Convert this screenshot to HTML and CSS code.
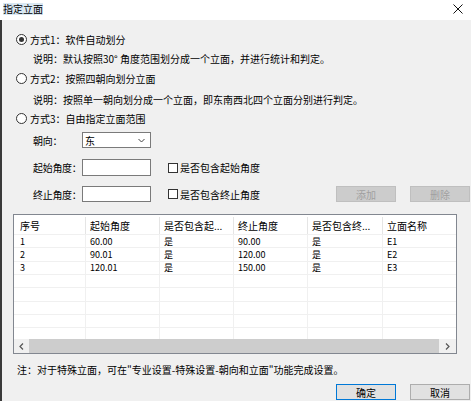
FILE: index.html
```html
<!DOCTYPE html>
<html lang="zh">
<head>
<meta charset="utf-8">
<title>指定立面</title>
<link rel="stylesheet" href="styles.css">
</head>
<body>
<div class="titlebar">
  <span class="title">指定立面</span>
  <span class="close"><svg width="10" height="10" viewBox="0 0 10 10"><path d="M0.5 0.5 L9.5 9.5 M9.5 0.5 L0.5 9.5" stroke="#111" stroke-width="1" fill="none"/></svg></span>
</div>
<div class="main">
  <div class="opt r1"><span class="radio checked"></span><span>方式1：软件自动划分</span></div>
  <div class="desc d1">说明：默认按照30° 角度范围划分成一个立面，并进行统计和判定。</div>
  <div class="opt r2"><span class="radio"></span><span>方式2：按照四朝向划分立面</span></div>
  <div class="desc d2">说明：按照单一朝向划分成一个立面，即东南西北四个立面分别进行判定。</div>
  <div class="opt r3"><span class="radio"></span><span>方式3：自由指定立面范围</span></div>

  <div class="field f-dir">
    <span class="label">朝向：</span>
    <div class="select"><span>东</span><svg class="chev" width="7" height="5" viewBox="0 0 7 5"><path d="M0.5 1 L3.5 4 L6.5 1" stroke="#444" stroke-width="1" fill="none"/></svg></div>
  </div>
  <div class="field f-start">
    <span class="label">起始角度：</span>
    <div class="input"></div>
    <span class="check"></span><span class="ctext">是否包含起始角度</span>
  </div>
  <div class="field f-end">
    <span class="label">终止角度：</span>
    <div class="input"></div>
    <span class="check"></span><span class="ctext">是否包含终止角度</span>
    <div class="btns">
      <span class="btn disabled">添加</span>
      <span class="btn disabled">删除</span>
    </div>
  </div>

  <div class="table">
    <div class="trow thead">
      <span class="c c1">序号</span><span class="c">起始角度</span><span class="c">是否包含起...</span><span class="c">终止角度</span><span class="c">是否包含终...</span><span class="c c6">立面名称</span>
    </div>
    <div class="tbody">
      <div class="trow"><span class="c c1">1</span><span class="c">60.00</span><span class="c">是</span><span class="c">90.00</span><span class="c">是</span><span class="c c6">E1</span></div>
      <div class="trow"><span class="c c1">2</span><span class="c">90.01</span><span class="c">是</span><span class="c">120.00</span><span class="c">是</span><span class="c c6">E2</span></div>
      <div class="trow"><span class="c c1">3</span><span class="c">120.01</span><span class="c">是</span><span class="c">150.00</span><span class="c">是</span><span class="c c6">E3</span></div>
      <div class="trow"><span class="c c1"></span><span class="c"></span><span class="c"></span><span class="c"></span><span class="c"></span><span class="c c6"></span></div>
      <div class="trow"><span class="c c1"></span><span class="c"></span><span class="c"></span><span class="c"></span><span class="c"></span><span class="c c6"></span></div>
      <div class="trow"><span class="c c1"></span><span class="c"></span><span class="c"></span><span class="c"></span><span class="c"></span><span class="c c6"></span></div>
      <div class="trow"><span class="c c1"></span><span class="c"></span><span class="c"></span><span class="c"></span><span class="c"></span><span class="c c6"></span></div>
      <div class="trow"><span class="c c1"></span><span class="c"></span><span class="c"></span><span class="c"></span><span class="c"></span><span class="c c6"></span></div>
    </div>
    <div class="hscroll">
      <span class="arrow left"><svg width="5" height="7" viewBox="0 0 5 7"><path d="M4 0.5 L1 3.5 L4 6.5" stroke="#555" stroke-width="1.2" fill="none"/></svg></span>
      <span class="thumb"></span>
      <span class="arrow right"><svg width="5" height="7" viewBox="0 0 5 7"><path d="M1 0.5 L4 3.5 L1 6.5" stroke="#555" stroke-width="1.2" fill="none"/></svg></span>
    </div>
  </div>

  <div class="note">注：对于特殊立面，可在"专业设置-特殊设置-朝向和立面"功能完成设置。</div>

  <div class="footer">
    <span class="btn primary">确定</span>
    <span class="btn">取消</span>
  </div>
</div>
</body>
</html>
```

FILE: styles.css
```css
* { box-sizing: border-box; }
html, body {
  margin: 0;
  padding: 0;
}
body {
  width: 471px;
  height: 401px;
  overflow: hidden;
  background: #f0f0f0;
  font-family: "Noto Sans CJK SC", "Noto Sans", sans-serif;
  font-size: 10px;
  color: #000;
}
.titlebar {
  height: 20px;
  background: #fff;
  display: flex;
  align-items: center;
  justify-content: space-between;
  padding: 0 8px 2px 3px;
}
.title {
  background: #d9e8f3;
  line-height: 12px;
  font-size: 10px;
}
.close {
  display: flex;
  align-items: center;
}
.main {
  height: 381px;
  border-left: 2px solid #3a3a3a;
  display: flex;
  flex-direction: column;
}
.opt {
  height: 18px;
  display: flex;
  align-items: center;
  padding-left: 14px;
}
.r1 { margin-top: 10px; }
.r2 { margin-top: 2px; }
.r3 { margin-top: 1px; }
.radio {
  width: 11px;
  height: 11px;
  border: 1px solid #333;
  border-radius: 50%;
  background: #fff;
  margin-right: 3px;
  display: flex;
  align-items: center;
  justify-content: center;
}
.radio.checked::after {
  content: "";
  width: 5px;
  height: 5px;
  border-radius: 50%;
  background: #333;
}
.desc {
  height: 18px;
  display: flex;
  align-items: center;
  padding-left: 31px;
}
.d1 { margin-top: 1px; }
.d2 { margin-top: 3px; }
.field {
  display: flex;
  align-items: center;
  padding-left: 31px;
  white-space: nowrap;
}
.f-dir { margin-top: 5px; height: 16px; }
.f-start { margin-top: 11px; height: 17px; }
.f-end { margin-top: 10px; height: 16px; }
.label {
  flex: none;
  width: 49px;
  white-space: nowrap;
  letter-spacing: -0.3px;
}
.select {
  flex: none;
  width: 69px;
  height: 16px;
  border: 1px solid #7a7a7a;
  background: #fff;
  display: flex;
  align-items: center;
  justify-content: space-between;
  padding: 0 5px 0 2px;
}
.chev { margin-top: 1px; }
.input {
  flex: none;
  width: 69px;
  height: 100%;
  border: 1px solid #7a7a7a;
  background: #fff;
}
.check {
  flex: none;
  width: 10px;
  height: 10px;
  border: 1px solid #333;
  background: #fff;
  margin-left: 17px;
  margin-right: 2px;
}
.btns {
  margin-left: auto;
  display: flex;
  gap: 14px;
  padding-right: 1px;
}
.btn {
  flex: none;
  width: 60px;
  height: 16px;
  border: 1px solid #adadad;
  background: #e1e1e1;
  display: flex;
  align-items: center;
  justify-content: center;
}
.btn.disabled {
  background: #cccccc;
  border-color: #bfbfbf;
  color: #a0a0a0;
}
.btn.primary {
  border-color: #0078d7;
}
.table {
  margin-top: 12px;
  margin-left: 11px;
  width: 444px;
  height: 140px;
  border: 1px solid #828790;
  background: #fff;
  overflow: hidden;
  display: flex;
  flex-direction: column;
}
.tbody {
  height: 104px;
  flex: none;
  overflow: hidden;
}
.trow {
  display: flex;
  height: 13.33px;
  border-bottom: 1px solid #f0f0f0;
  white-space: nowrap;
}
.tbody .trow { font-size: 9px; }
.thead {
  flex: none;
  height: 20px;
  padding-top: 2px;
}
.c {
  flex: none;
  width: 74px;
  height: 100%;
  padding-left: 4px;
  border-right: 1px solid #f0f0f0;
  display: flex;
  align-items: center;
  line-height: 11px;
}
.thead .c { border-right-color: #e5e5e5; }
.c1 { width: 72px; padding-left: 6px; }
.c6 { width: 80px; border-right: none; }
.c:nth-child(5) { width: 75px; }
.hscroll {
  height: 14px;
  flex: none;
  margin-top: auto;
  display: flex;
  background: #f0f0f0;
}
.arrow {
  display: flex;
  align-items: center;
  justify-content: center;
}
.arrow.left { width: 15px; }
.arrow.right { width: 17px; }
.thumb {
  flex: 1;
  background: #cdcdcd;
}
.note {
  margin-top: 7px;
  height: 16px;
  display: flex;
  align-items: center;
  padding-left: 15px;
}
.footer {
  margin-top: 7px;
  display: flex;
  justify-content: flex-end;
  gap: 14px;
  padding-right: 1px;
}
```
